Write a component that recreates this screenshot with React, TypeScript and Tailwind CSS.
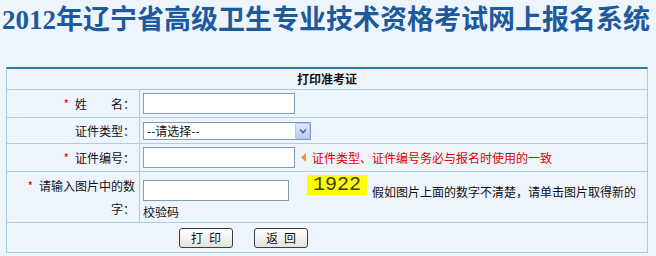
import React from "react";

const sans = { fontFamily: '"Noto Sans CJK SC", "Noto Sans", sans-serif' };

function Star() {
  return <span className="text-[#e00000] text-[12px] mr-[6px]">*</span>;
}

export default function App() {
  return (
    <div
      className="w-[656px] h-[256px] bg-[#eef4fc] overflow-hidden text-[12px] text-[#111]"
      style={sans}
    >
      <h1
        className="pl-[2px] pt-[5px] h-[67px] text-[27px] leading-[30px] font-bold text-[#1d5a9c] whitespace-nowrap"
        style={{ fontFamily: '"Liberation Serif", "Noto Sans CJK SC", serif' }}
      >
        2012年辽宁省高级卫生专业技术资格考试网上报名系统
      </h1>
      <div className="ml-[6px] w-[642px] border-t-2 border-t-[#2e7c9c] border-x border-x-[#a8d0e2]">
        <div className="h-[21px] flex items-center justify-center border-b border-[#a8d0e2] font-bold leading-none">
          打印准考证
        </div>
        {/* row 1 */}
        <div className="grid grid-cols-[133px_1fr] h-[28px] border-b border-[#a8d0e2]">
          <div className="flex items-center justify-end pr-[4px] border-r border-[#a8d0e2]">
            <Star />
            <span>姓　　名：</span>
          </div>
          <div className="flex items-center pl-[3px]">
            <div className="w-[152px] h-[21px] bg-white border border-[#7f9db9]" />
          </div>
        </div>
        {/* row 2 */}
        <div className="grid grid-cols-[133px_1fr] h-[26px] border-b border-[#a8d0e2]">
          <div className="flex items-center justify-end pr-[4px] border-r border-[#a8d0e2]">
            <span>证件类型：</span>
          </div>
          <div className="flex items-center pl-[3px]">
            <div className="w-[168px] h-[18px] bg-white border border-[#7f9db9] flex items-center justify-between">
              <span className="pl-[3px] leading-none">--请选择--</span>
              <div className="w-[15px] h-[16px] bg-gradient-to-b from-[#dfe9fb] to-[#b7cbf3] border border-[#b2c6ee] flex items-center justify-center rounded-[1px]">
                <svg width="8" height="6" viewBox="0 0 8 6">
                  <path d="M1 1.5 L4 4.5 L7 1.5" stroke="#4d6185" strokeWidth="1.6" fill="none" />
                </svg>
              </div>
            </div>
          </div>
        </div>
        {/* row 3 */}
        <div className="grid grid-cols-[133px_1fr] h-[28px] border-b border-[#a8d0e2]">
          <div className="flex items-center justify-end pr-[4px] border-r border-[#a8d0e2]">
            <Star />
            <span>证件编号：</span>
          </div>
          <div className="flex items-center pl-[3px]">
            <div className="w-[152px] h-[21px] bg-white border border-[#7f9db9]" />
            <svg width="6" height="9" viewBox="0 0 6 9" className="ml-[6px] mr-[5px]">
              <path d="M5 0 L0 4.5 L5 9 Z" fill="#f39a1e" />
            </svg>
            <span className="text-[#e00000] leading-none">证件类型、证件编号务必与报名时使用的一致</span>
          </div>
        </div>
        {/* row 4 */}
        <div className="grid grid-cols-[133px_1fr] h-[51px] border-b border-[#a8d0e2]">
          <div className="flex flex-col items-end justify-center pr-[4px] border-r border-[#a8d0e2] leading-[23px]">
            <div>
              <Star />
              请输入图片中的数
            </div>
            <div>字：</div>
          </div>
          <div className="pl-[3px] pt-[3px]">
            <div className="flex items-start">
              <div className="mt-[5px] w-[146px] h-[21px] bg-white border border-[#7f9db9]" />
              <div
                className="ml-[18px] w-[60px] h-[20px] bg-[#ffff00] flex items-center justify-center text-[20px] leading-none text-[#3e3e1a]"
                style={{ fontFamily: '"Liberation Mono", monospace' }}
              >
                1922
              </div>
              <span className="ml-[5px] mt-[10px] leading-[14px]">假如图片上面的数字不清楚，请单击图片取得新的</span>
            </div>
            <div className="leading-[14px] mt-[4px]">校验码</div>
          </div>
        </div>
        {/* row 5 */}
        <div className="h-[30px] border-b border-[#a8d0e2] flex items-center pl-[172px] gap-[21px]">
          <button className="w-[54px] h-[20px] rounded-[3px] border border-[#3c3c3c] bg-gradient-to-b from-white to-[#e4e4dc] text-[12px] leading-none tracking-[6px] pl-[6px]">
            打印
          </button>
          <button className="w-[54px] h-[20px] rounded-[3px] border border-[#3c3c3c] bg-gradient-to-b from-white to-[#e4e4dc] text-[12px] leading-none tracking-[6px] pl-[6px]">
            返回
          </button>
        </div>
      </div>
    </div>
  );
}
